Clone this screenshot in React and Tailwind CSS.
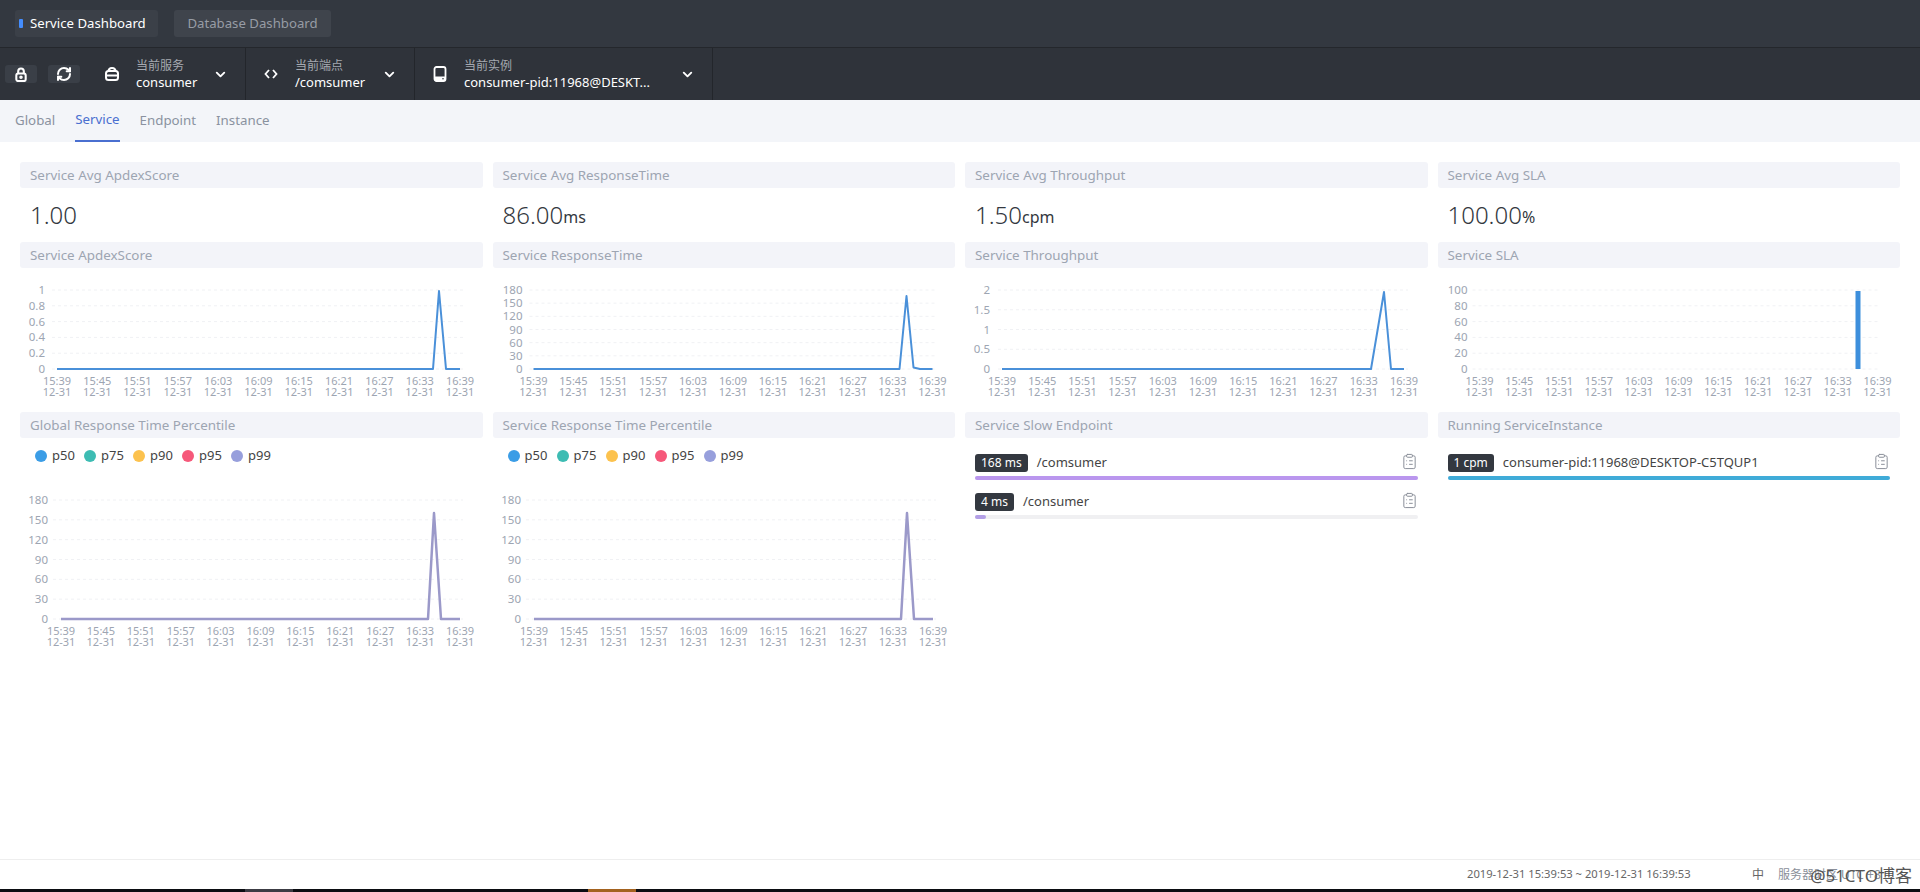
import { RefreshCw, ChevronDown, ClipboardList } from 'lucide-react';

const times = ['15:39', '15:45', '15:51', '15:57', '16:03', '16:09', '16:15', '16:21', '16:27', '16:33', '16:39'];

const LockIcon = () => (
  <svg width="14" height="15" viewBox="0 0 14 16" fill="none" stroke="white" strokeWidth="2.2">
    <path d="M4 7V4.5a3 3 0 0 1 6 0V7" />
    <rect x="2" y="7" width="10" height="8" rx="2" />
    <circle cx="7" cy="11" r="0.8" fill="white" />
  </svg>
);

const ServiceIcon = () => (
  <svg width="14" height="14" viewBox="0 0 14 14" fill="none" stroke="white" strokeWidth="2">
    <path d="M3.5 4.5C3.5 2.5 5 1 7 1s3.5 1.5 3.5 3.5" />
    <rect x="1" y="4" width="12" height="9" rx="2.5" />
    <path d="M1.5 8.5h11" />
  </svg>
);

const CodeIcon = () => (
  <svg width="14" height="14" viewBox="0 0 14 14" fill="none" stroke="white" strokeWidth="1.8">
    <path d="M5 3 1.5 7 5 11" />
    <path d="M9 3l3.5 4L9 11" />
  </svg>
);

const InstanceIcon = () => (
  <svg width="14" height="16" viewBox="0 0 14 16" fill="none">
    <rect x="1.5" y="1" width="11" height="14" rx="2" stroke="white" strokeWidth="1.8" />
    <rect x="1.5" y="10.5" width="11" height="4.5" rx="1" fill="white" />
    <circle cx="10" cy="12.7" r="0.8" fill="#2f333a" />
  </svg>
);

function Chart({ height, top, bottom, yLabels, yRight, gridL, gridR, xStart, xStep, line, bar, thick }) {
  const labelY = bottom + 12;
  const rowH = (bottom - top) / (yLabels.length - 1);
  return (
    <svg width="462" height={height} className="block">
      {yLabels.map((label, i) => (
        <g key={label}>
          <line x1={gridL} x2={gridR} y1={top + i * rowH} y2={top + i * rowH} stroke="#f0f1f4" strokeDasharray="3 3" />
          <text x={yRight} y={top + i * rowH + 4} textAnchor="end" fontSize="11.5" fill="#9da5b2">{label}</text>
        </g>
      ))}
      {times.map((time, i) => (
        <text key={time} x={xStart + i * xStep} textAnchor="middle" fontSize="11" fill="#9da5b2">
          <tspan x={xStart + i * xStep} y={labelY + 4}>{time}</tspan>
          <tspan x={xStart + i * xStep} y={labelY + 15}>12-31</tspan>
        </text>
      ))}
      {line && (
        <polyline
          points={line}
          fill="none"
          stroke={thick ? '#9b99c9' : '#4a90d9'}
          strokeWidth={thick ? 2.5 : 2}
          strokeLinejoin="round"
        />
      )}
      {bar && <rect x={bar} y={top + 1} width="5" height={bottom - top - 1} fill="#3d8fdc" />}
    </svg>
  );
}

const Title = ({ children }) => (
  <div className="h-[26px] rounded-[3px] bg-[#f3f4f9] pl-[10px] text-[13.4px] leading-[26px] text-[#9da5b2]">{children}</div>
);

const Value = ({ value, unit }) => (
  <div className="flex h-[54px] items-center pl-[10px] text-[24px] font-light text-[#333840]">
    <span>{value}</span>
    {unit && <span className="mt-[4px] text-[16px] font-normal">{unit}</span>}
  </div>
);

const legend = [
  ['p50', 'bg-[#3b9de6]'],
  ['p75', 'bg-[#3dbcb3]'],
  ['p90', 'bg-[#fcc24e]'],
  ['p95', 'bg-[#f6587a]'],
  ['p99', 'bg-[#979fdc]'],
];

function Percentile({ title }) {
  return (
    <div className="px-[5px]">
      <Title>{title}</Title>
      <div className="flex h-[40px] items-center gap-[10px] pb-[4px] pl-[15px]">
        {legend.map(([name, color]) => (
          <div key={name} className="flex items-center gap-[5px] text-[13px] text-[#444]">
            <span className={`h-[12px] w-[12px] rounded-full ${color}`} />
            <span className="w-[22px]">{name}</span>
          </div>
        ))}
      </div>
      <Chart
        height={172}
        top={22}
        bottom={141}
        yLabels={['180', '150', '120', '90', '60', '30', '0']}
        yRight={28}
        gridL={33}
        gridR={443}
        xStart={41}
        xStep={39.9}
        line="41,141 408,141 414,35 421,141 440,141"
        thick
      />
    </div>
  );
}

function Progress({ badge, name, width, barColor }) {
  return (
    <div className="mb-[13px]">
      <div className="flex h-[18px] items-center">
        <span className="rounded-[3px] bg-[#333840] px-[6px] text-[12px] leading-[18px] text-white">{badge}</span>
        <span className="ml-[9px] flex-1 text-[13px] text-[#444]">{name}</span>
        <ClipboardList size={17} strokeWidth={1.4} className="-mt-[4px] text-[#8a8f99]" />
      </div>
      <div className="mt-[4px] h-[4px] rounded-full bg-[#f0f0f2]">
        <div className={`h-full rounded-full ${barColor} ${width}`} />
      </div>
    </div>
  );
}

function SelectGroup({ icon, label, value, width }) {
  return (
    <div className={`flex h-full items-center border-r border-[#23262b] pl-[18px] pr-[17px] ${width}`}>
      {icon}
      <div className="ml-[17px] flex-1 leading-none">
        <div className="text-[12px] leading-[15px] text-[#a5a9b0]">{label}</div>
        <div className="text-[13px] leading-[18px] text-white">{value}</div>
      </div>
      <ChevronDown size={15} strokeWidth={3} className="text-white" />
    </div>
  );
}

export default function App() {
  return (
    <div className="flex h-screen flex-col overflow-hidden bg-white font-['Noto_Sans','Noto_Sans_CJK_SC',sans-serif]">
      {/* header */}
      <div className="flex h-[48px] items-start gap-[16px] border-b border-[#24272c] bg-[#333840] pl-[15px] pt-[10px] text-[13.2px]">
        <div className="flex h-[27px] w-[143px] items-center rounded-[3px] bg-[#3b4048] pl-[4px] text-white">
          <span className="mr-[7px] h-[9px] w-[4px] rounded-[1px] bg-[#448dfe]" />
          Service Dashboard
        </div>
        <div className="flex h-[27px] w-[157px] items-center justify-center rounded-[3px] bg-[#3f444c] text-[#979ca5]">Database Dashboard</div>
      </div>

      {/* toolbar */}
      <div className="flex h-[52px] items-center bg-[#2f333a]">
        <button className="ml-[5px] flex h-[18px] w-[32px] items-center justify-center rounded-[3px] bg-[#3a3f47]">
          <LockIcon />
        </button>
        <button className="ml-[11px] flex h-[18px] w-[32px] items-center justify-center rounded-[3px] bg-[#3a3f47]">
          <RefreshCw size={16} strokeWidth={3} className="text-white" />
        </button>
        <div className="w-[7px]" />
        <SelectGroup icon={<ServiceIcon />} label="当前服务" value="consumer" width="w-[159px]" />
        <SelectGroup icon={<CodeIcon />} label="当前端点" value="/comsumer" width="w-[169px]" />
        <SelectGroup icon={<InstanceIcon />} label="当前实例" value="consumer-pid:11968@DESKT..." width="w-[298px]" />
      </div>

      {/* tabs */}
      <div className="flex h-[42px] gap-[20px] bg-[#f3f5f9] pl-[15px] text-[13.3px] text-[#8a92a0]">
        <div className="flex items-center">Global</div>
        <div className="flex items-center border-b-2 border-[#4a6fd0] text-[#4a6fd0]">Service</div>
        <div className="flex items-center">Endpoint</div>
        <div className="flex items-center">Instance</div>
      </div>

      {/* dashboard grid */}
      <div className="grid grid-cols-4 px-[15px] pt-[20px]">
        <div className="px-[5px]"><Title>Service Avg ApdexScore</Title><Value value="1.00" /></div>
        <div className="px-[5px]"><Title>Service Avg ResponseTime</Title><Value value="86.00" unit="ms" /></div>
        <div className="px-[5px]"><Title>Service Avg Throughput</Title><Value value="1.50" unit="cpm" /></div>
        <div className="px-[5px]"><Title>Service Avg SLA</Title><Value value="100.00" unit="%" /></div>

        <div className="h-[170px] px-[5px]">
          <Title>Service ApdexScore</Title>
          <Chart
            height={132}
            top={22}
            bottom={101}
            yLabels={['1', '0.8', '0.6', '0.4', '0.2', '0']}
            yRight={25}
            gridL={32}
            gridR={445}
            xStart={37}
            xStep={40.3}
            line="37,101 413,101 419,23 426,101 440,101"
          />
        </div>
        <div className="h-[170px] px-[5px]">
          <Title>Service ResponseTime</Title>
          <Chart
            height={132}
            top={22}
            bottom={101}
            yLabels={['180', '150', '120', '90', '60', '30', '0']}
            yRight={29.5}
            gridL={36.5}
            gridR={442.5}
            xStart={40.5}
            xStep={39.9}
            line="40.5,101 406.5,101 413.5,28 420.5,99.5 427,101 439.5,101"
          />
        </div>
        <div className="h-[170px] px-[5px]">
          <Title>Service Throughput</Title>
          <Chart
            height={132}
            top={22}
            bottom={101}
            yLabels={['2', '1.5', '1', '0.5', '0']}
            yRight={25}
            gridL={33}
            gridR={443}
            xStart={37}
            xStep={40.2}
            line="37,101 406,101 419,24 426,101 439,101"
          />
        </div>
        <div className="h-[170px] px-[5px]">
          <Title>Service SLA</Title>
          <Chart
            height={132}
            top={22}
            bottom={101}
            yLabels={['100', '80', '60', '40', '20', '0']}
            yRight={29.5}
            gridL={34.5}
            gridR={442.5}
            xStart={41.5}
            xStep={39.8}
            bar={417.5}
          />
        </div>

        <Percentile title="Global Response Time Percentile" />
        <Percentile title="Service Response Time Percentile" />
        <div className="px-[5px]">
          <Title>Service Slow Endpoint</Title>
          <div className="px-[10px] pt-[16px]">
            <Progress badge="168 ms" name="/comsumer" width="w-full" barColor="bg-[#ba96ee]" />
            <Progress badge="4 ms" name="/consumer" width="w-[11px]" barColor="bg-[#b39fe6]" />
          </div>
        </div>
        <div className="px-[5px]">
          <Title>Running ServiceInstance</Title>
          <div className="px-[10px] pt-[16px]">
            <Progress badge="1 cpm" name="consumer-pid:11968@DESKTOP-C5TQUP1" width="w-full" barColor="bg-[#3fabd8]" />
          </div>
        </div>
      </div>

      {/* footer */}
      <div className="relative mt-auto flex h-[30px] items-center border-t border-[#eeeeee] pl-[1467px] text-[11.2px] text-[#666]">
        <span className="w-[285px]">2019-12-31 15:39:53 ~ 2019-12-31 16:39:53</span>
        <span className="w-[26px] text-[12px]">中</span>
        <span className="text-[12px] text-[#8a8f99]">服务器时区 UTC +8</span>
        <span className="absolute right-[8px] top-[3px] text-[17px] text-[#555]">@51CTO博客</span>
      </div>
      <div className="flex h-[3px] bg-[#0b0d12]">
        <span className="ml-[245px] w-[48px] bg-[#3c3c44]" />
        <span className="ml-[295px] w-[48px] bg-[#a3621f]" />
      </div>
    </div>
  );
}
